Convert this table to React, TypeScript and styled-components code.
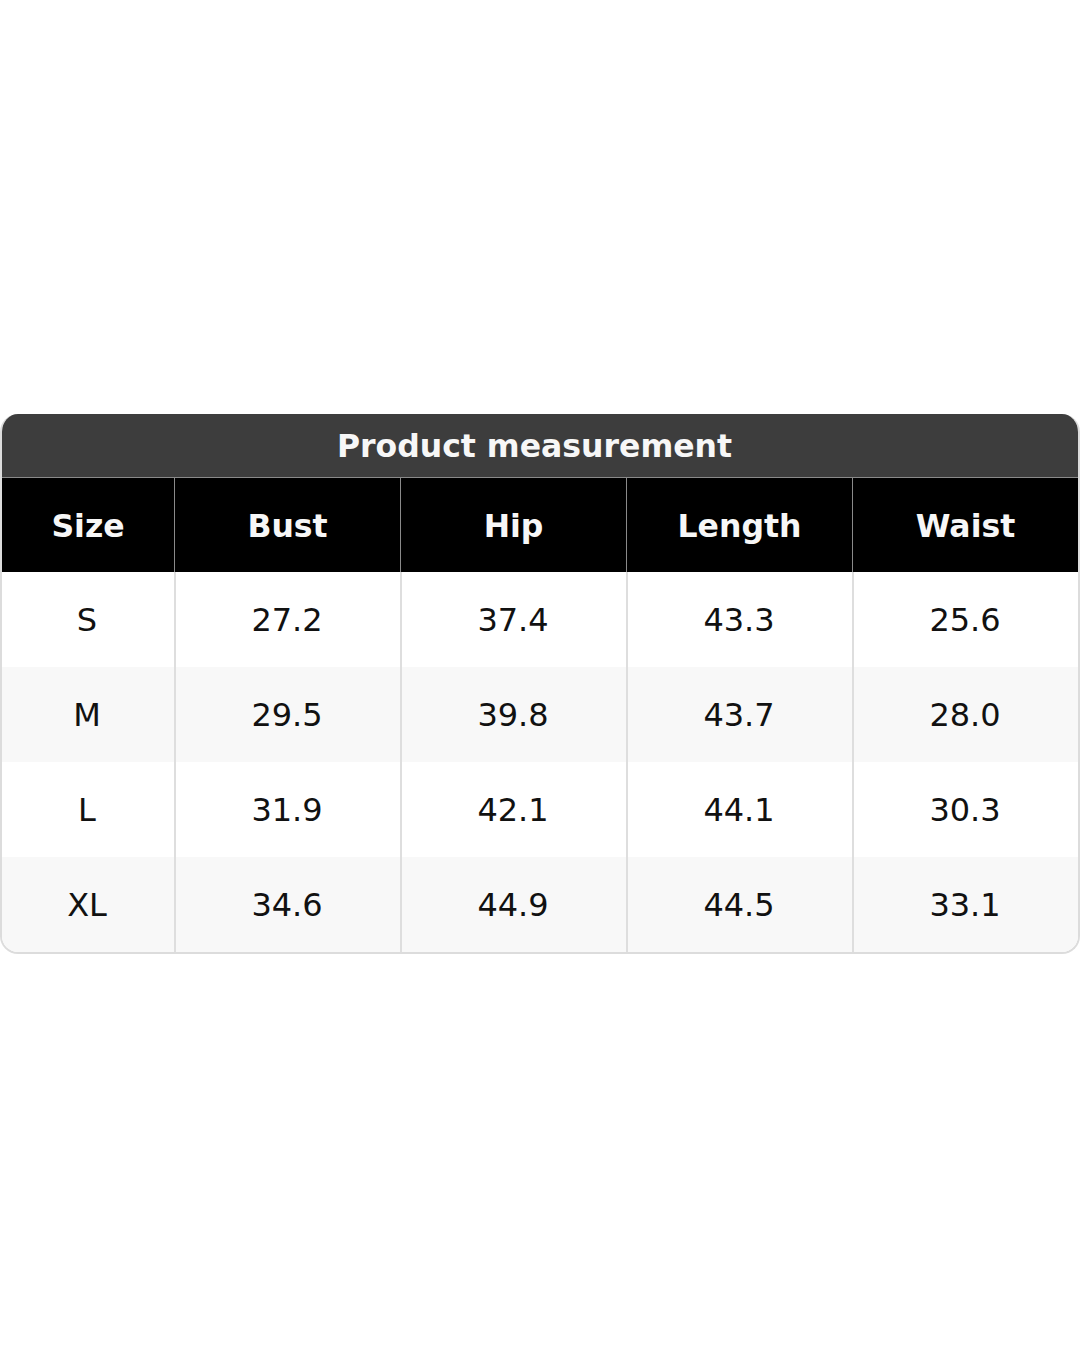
import styled, { createGlobalStyle } from "styled-components";

const GlobalStyle = createGlobalStyle`
  html, body {
    margin: 0;
    padding: 0;
    background: #ffffff;
  }
  body {
    font-family: "DejaVu Sans", "Liberation Sans", sans-serif;
  }
`;

const columns = ["Size", "Bust", "Hip", "Length", "Waist"];

const rows: string[][] = [
  ["S", "27.2", "37.4", "43.3", "25.6"],
  ["M", "29.5", "39.8", "43.7", "28.0"],
  ["L", "31.9", "42.1", "44.1", "30.3"],
  ["XL", "34.6", "44.9", "44.5", "33.1"],
];

export default function App() {
  return (
    <>
      <GlobalStyle />
      <Page>
        <Card>
          <Title>Product measurement</Title>
          <HeaderRow>
            {columns.map((c) => (
              <HeadCell key={c}>{c}</HeadCell>
            ))}
          </HeaderRow>
          {rows.map((r, i) => (
            <BodyRow key={r[0]} $striped={i % 2 === 1}>
              {r.map((v, j) => (
                <Cell key={j}>{v}</Cell>
              ))}
            </BodyRow>
          ))}
        </Card>
      </Page>
    </>
  );
}

const Page = styled.div`
  width: 1080px;
  height: 1350px;
  padding-top: 414px;
  box-sizing: border-box;
`;

const Card = styled.div`
  width: 1080px;
  box-sizing: border-box;
  border: 2px solid #dcdcdc;
  border-top: none;
  border-radius: 18px;
  overflow: hidden;
  background: #ffffff;
`;

const Title = styled.div`
  height: 64px;
  background: #3d3d3d;
  color: #f7f7f7;
  font-size: 31.5px;
  font-weight: bold;
  display: flex;
  align-items: center;
  justify-content: center;
  border-bottom: 1px solid #8a8a8a;
  margin: 0 -2px;
  padding: 1px 11px 0 0;
  box-sizing: border-box;
`;

const gridCols = "172px 226px 226px 226px 1fr";

const HeaderRow = styled.div`
  display: grid;
  grid-template-columns: ${gridCols};
  height: 94px;
  background: #000000;
`;

const HeadCell = styled.div`
  display: flex;
  align-items: center;
  justify-content: center;
  color: #f7f7f7;
  font-size: 31.5px;
  font-weight: bold;
  padding-top: 2px;
  box-sizing: border-box;
  border-left: 1px solid #8a8a8a;
  &:first-child {
    border-left: none;
  }
`;

const BodyRow = styled.div<{ $striped: boolean }>`
  display: grid;
  grid-template-columns: ${gridCols};
  height: 95px;
  background: ${(p) => (p.$striped ? "#f8f8f8" : "#ffffff")};
`;

const Cell = styled.div`
  display: flex;
  align-items: center;
  justify-content: center;
  color: #111111;
  font-size: 32px;
  padding-right: 2px;
  box-sizing: border-box;
  border-left: 2px solid #dedede;
  &:first-child {
    border-left: none;
  }
`;
